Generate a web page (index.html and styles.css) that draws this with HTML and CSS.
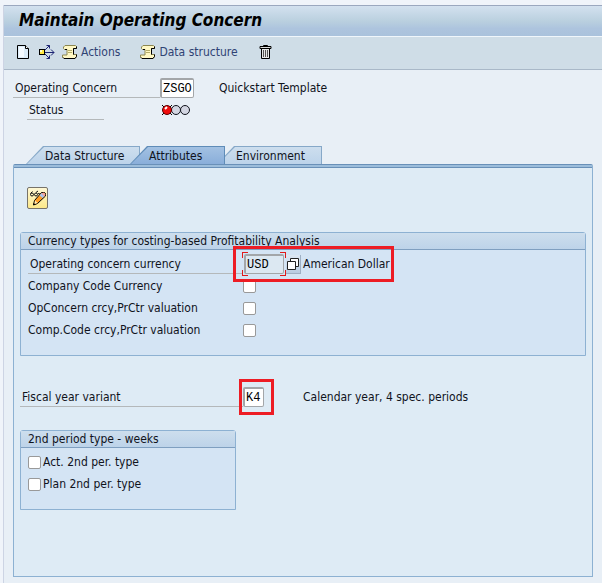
FILE: index.html
```html
<!DOCTYPE html>
<html lang="en">
<head>
    <meta charset="utf-8">
    <title>Maintain Operating Concern</title>
    <link rel="stylesheet" href="styles.css">
</head>
<body>
    <main class="window">
        <header class="title-bar">
            <h1>Maintain Operating Concern</h1>
        </header>

        <nav class="toolbar" aria-label="Application toolbar">
            <button type="button" class="tool" aria-label="Create">
                <svg width="16" height="16" viewBox="0 0 16 16">
                    <path d="M1.500 1.500h8l3 3v10h-11z" fill="#dcecf8" stroke="#000"/>
                    <path d="M3 3h5v10H3z" fill="#f4faff"/>
                    <path d="M9.500 1.500v3h3" fill="#fff" stroke="#000"/>
                </svg>
            </button>
            <button type="button" class="tool" aria-label="Other object">
                <svg width="16" height="16" viewBox="0 0 16 16">
                    <path d="M6 8.500h9M12 5.500l3 3-3 3M6 6l4.500-4.500M6 10l4.500 4.500M7.500 1.500h3v3M7.500 14.500h3v-3" fill="none" stroke="#1c2474"/>
                    <rect x=".5" y="5.500" width="5" height="5" fill="#ffe840" stroke="#000"/>
                    <path d="M1 6h2v2H1z" fill="#fffbc8"/>
                </svg>
            </button>
            <button type="button" class="tool">
                <svg width="16" height="16" viewBox="0 0 16 16">
                    <path d="M3 1.500h10.500l1 1v2h-3v6h3v2l-1.500 2H2l-1.500-1.500V11h4.500V5.500H2.500L1.500 4.500V3z" fill="#fff8c4" stroke="#8c8750"/>
                    <path d="M11.500 10.500V4.500h3v-2M1 13.500l1 1h11l1.500-2v-2M5 5.500H3" fill="none" stroke="#000"/>
                    <path d="M6 6.500h4M6 8.500h4" stroke="#b5ad6a"/>
                </svg>
                Actions
            </button>
            <button type="button" class="tool tool-structure">
                <svg width="16" height="16" viewBox="0 0 16 16">
                    <path d="M3 1.500h10.500l1 1v2h-3v6h3v2l-1.500 2H2l-1.500-1.500V11h4.500V5.500H2.500L1.500 4.500V3z" fill="#fff8c4" stroke="#8c8750"/>
                    <path d="M11.500 10.500V4.500h3v-2M1 13.500l1 1h11l1.500-2v-2M5 5.500H3" fill="none" stroke="#000"/>
                    <path d="M6 6.500h4M6 8.500h4" stroke="#b5ad6a"/>
                </svg>
                Data structure
            </button>
            <button type="button" class="tool tool-delete" aria-label="Delete">
                <svg width="14" height="16" viewBox="0 0 14 16">
                    <path d="M2.500 5v9.500h8V5" fill="#e8e8e8" stroke="#000"/>
                    <path d="M4.500 6v7M6.500 6v7M8.500 6v7" stroke="#555"/>
                    <path d="M1 2.500h11v2H1zM4.500 2.500v-1h4v1" fill="#ddd" stroke="#000"/>
                </svg>
            </button>
        </nav>

        <section class="concern">
            <div class="row">
                <label class="label concern-label" for="concern">Operating Concern</label>
                <input class="field concern-field" id="concern" type="text" value="ZSGO">
                <span class="concern-text">Quickstart Template</span>
            </div>
            <div class="row">
                <span class="label status-label">Status</span>
                <svg class="lights" width="30" height="14" viewBox="0 0 30 14" role="img" aria-label="Red">
                    <circle cx="24" cy="7" r="4.500" fill="#d3d6e2" stroke="#10131c"/>
                    <circle cx="15" cy="7" r="4.500" fill="#d3d6e2" stroke="#10131c"/>
                    <path d="M1 2l10 10M11 2L1 12" stroke="#000"/>
                    <circle cx="6" cy="7" r="4.500" fill="#f00c0c" stroke="#5c0000"/>
                    <path d="M4 6l2-2" stroke="#fff" stroke-width="2"/>
                </svg>
            </div>
        </section>

        <div class="tabs" role="tablist">
            <button type="button" role="tab" class="tab tab-structure" aria-selected="false">Data Structure</button>
            <button type="button" role="tab" class="tab tab-attributes" aria-selected="true">Attributes</button>
            <button type="button" role="tab" class="tab tab-environment" aria-selected="false">Environment</button>
        </div>

        <section class="panel" role="tabpanel">
            <button type="button" class="edit" aria-label="Display / Change">
                <svg width="18" height="18" viewBox="0 0 18 18">
                    <path d="M1.500 4.500l2-2M1.500 5.500a1.500 1.500 0 1 0 3 0a1.500 1.500 0 1 0-3 0M5.500 5.500a1.500 1.500 0 1 0 3 0a1.500 1.500 0 1 0-3 0M7 3.500l2-1.500M9 4.500l2 .5" fill="none" stroke="#111"/>
                    <path d="M4.500 16l1-4.500L12.500 3.500h3l1 1v2.500l-8 7.500z" fill="#ff9d24" stroke="#000"/>
                    <path d="M10.500 6.500l2-2.500 3 3-2 2z" fill="#a9c4ee"/>
                    <path d="M13.500 4l2.500 2.500" stroke="#f4a0a0" stroke-width="2"/>
                    <path d="M6 11.500l2.500 2.500-3 1z" fill="#fff3c0"/>
                    <path d="M4.500 14l2 1.500-2 .5z" fill="#000"/>
                </svg>
            </button>

            <fieldset class="group">
                <legend class="group-title">Currency types for costing-based Profitability Analysis</legend>
                <div class="row">
                    <label class="label currency-label" for="currency">Operating concern currency</label>
                    <div class="currency">
                        <span class="focus">
                            <input class="field currency-field" id="currency" type="text" value="USD">
                        </span>
                        <button type="button" class="help" aria-label="Possible entries">
                            <svg width="12" height="12" viewBox="0 0 12 12">
                                <path d="M3.500 3V.5h8v8H9" fill="#fff" stroke="#222"/>
                                <path d="M.5 3.500h8v8h-8z" fill="#fff" stroke="#222"/>
                            </svg>
                        </button>
                        American Dollar
                    </div>
                </div>
                <div class="row check-row">
                    <label class="check-label" for="company">Company Code Currency</label>
                    <input class="check" id="company" type="checkbox">
                </div>
                <div class="row check-row">
                    <label class="check-label" for="op-valuation">OpConcern crcy,PrCtr valuation</label>
                    <input class="check" id="op-valuation" type="checkbox">
                </div>
                <div class="row check-row">
                    <label class="check-label" for="comp-valuation">Comp.Code crcy,PrCtr valuation</label>
                    <input class="check" id="comp-valuation" type="checkbox">
                </div>
            </fieldset>

            <div class="row fiscal">
                <label class="label fiscal-label" for="fiscal">Fiscal year variant</label>
                <div class="fiscal-value">
                    <input class="field fiscal-field" id="fiscal" type="text" value="K4">
                </div>
                <span>Calendar year, 4 spec. periods</span>
            </div>

            <fieldset class="group group-period">
                <legend class="group-title">2nd period type - weeks</legend>
                <div class="row check-row">
                    <input class="check" id="act" type="checkbox">
                    <label for="act">Act. 2nd per. type</label>
                </div>
                <div class="row check-row">
                    <input class="check" id="plan" type="checkbox">
                    <label for="plan">Plan 2nd per. type</label>
                </div>
            </fieldset>
        </section>
    </main>
</body>
</html>
```
FILE: styles.css
```css
* {
    box-sizing: border-box;
}

body {
    margin: 0;
    padding: 5px 0 0 3px;
    min-height: 100vh;
    display: flex;

    font: 12px/16px "DejaVu Sans Condensed", "Noto Sans", sans-serif;
    color: #10131c;
    background-color: #f0f4fa;
}

button, input {
    margin: 0;
    padding: 0;

    font: inherit;
    color: inherit;
    border: 0;
    background: none;
}

.window {
    flex: 1;
    min-width: 0;
    display: flex;
    flex-direction: column;

    border-left: 1px solid #cdd4e4;
    background-color: #e8eff6;
}

.title-bar {
    height: 32px;
    padding-left: 15px;
    display: flex;
    align-items: center;

    border-top: 1px solid #9ba8bf;
    border-bottom: 1px solid #f0f6fb;
    background: linear-gradient(#d3e1ef, #bad0df 50%, #adc4de 75%, #aac2dc);
}

h1 {
    margin: 0 0 2px;

    font-size: 17px;
    line-height: 24px;
    font-style: italic;
    color: #000;
}

.toolbar {
    height: 33px;
    padding: 0 12px 3px;
    display: flex;
    align-items: center;
    gap: 7px;

    border-bottom: 1px solid #a9b8c8;
    background-color: #cfdde7;
}

.tool {
    display: flex;
    align-items: center;
    gap: 3px;

    color: #2f4374;
}

.tool-structure {
    margin-left: 13px;
}

.tool-delete {
    margin-left: 14px;
}

.row {
    height: 22px;
    display: flex;
    align-items: center;
}

.label {
    height: 20px;
    padding-left: 2px;
    line-height: 20px;

    border-bottom: 1px solid #b4b8ba;
}

.field {
    height: 20px;
    padding: 0 1px;

    font: 12px/16px "Liberation Mono", monospace;
    color: #000;
    border: 2px solid #a3a6a9;
    border-right-width: 1px;
    border-bottom-width: 1px;
    border-radius: 2px;
    background-color: #fff;
}

.concern {
    padding: 7px 9px 0;
}

.concern-label {
    width: 147px;
}

.concern-field {
    width: 34px;
}

.concern-text {
    margin-left: 25px;
}

.status-label {
    width: 77px;
    margin-left: 14px;
}

.lights {
    margin-left: 57px;
}

/* tabs */

.tabs {
    margin: 25px 9px 0 22px;
    display: flex;
}

.tab {
    position: relative;
    z-index: 0;
    height: 18px;
    padding: 3px 0 0 19px;

    line-height: 15px;
    text-align: left;
}

.tab::before, .tab::after {
    content: "";
    position: absolute;
    inset: 0;
    z-index: -2;

    background-color: #86a8c8;
    clip-path: polygon(0 100%, 17px 0, 100% 0, 100% 100%);
}

.tab::after {
    inset: 1px 1px 0 1px;
    z-index: -1;

    background: linear-gradient(#cddeee, #bcd3ea);
}

.tab-structure {
    width: 114px;
}

.tab-attributes {
    z-index: 1;
    width: 95px;
    margin-left: -10px;
}

.tab-attributes::before {
    background-color: #5f8cb8;
}

.tab-attributes::after {
    background: linear-gradient(#a3c1e2, #89aeda);
}

.tab-environment {
    width: 105px;
    margin-left: -8px;
}

.panel {
    flex: 1;
    margin: 0 9px 6px;
    padding: 22px 6px;

    border: 1px solid #8db1d2;
    border-top-color: #6990b8;
    border-radius: 2px 2px 0 0;
    background: linear-gradient(#9cbddb 2px, #6990b8 2px, #6990b8 3px, #deebf5 3px);
}

.edit {
    width: 21px;
    height: 22px;
    margin-left: 7px;
    display: flex;
    align-items: center;
    justify-content: center;

    border: 1px solid #77736a;
    border-radius: 2px;
    background: linear-gradient(#fff8d4, #fde98a);
}

/* groups */

.group {
    min-width: 0;
    margin: 23px 0 0;
    padding: 0 0 14px;

    border: 1px solid #8db1d2;
    border-radius: 3px 3px 0 0;
    background-color: #d4e4f4;
}

.group-title {
    float: left;
    width: 100%;
    height: 17px;
    margin-bottom: 3px;
    padding: 0 7px;

    border-bottom: 1px solid #7f9fc0;
    background: linear-gradient(#cddeed, #bdd3e9);
}

.group .row {
    clear: both;
}

.currency-label {
    width: 214px;
    margin-left: 7px;
}

.currency {
    position: relative;
    display: flex;
    align-items: center;
    gap: 2px;
}

/* red frames over the highlighted fields */

.currency::after, .fiscal-value::after {
    content: "";
    position: absolute;
    inset: -6px -4px -6px -9px;

    border: 3px solid #ed1c24;
    pointer-events: none;
}

.focus {
    --mark: #e01b1b;
    height: 24px;
    padding: 2px;

    background:
        linear-gradient(var(--mark), var(--mark)) 0 0 / 6px 1px,
        linear-gradient(var(--mark), var(--mark)) 0 0 / 1px 6px,
        linear-gradient(var(--mark), var(--mark)) 100% 0 / 6px 1px,
        linear-gradient(var(--mark), var(--mark)) 100% 0 / 1px 6px,
        linear-gradient(var(--mark), var(--mark)) 0 100% / 6px 1px,
        linear-gradient(var(--mark), var(--mark)) 0 100% / 1px 6px,
        linear-gradient(var(--mark), var(--mark)) 100% 100% / 6px 1px,
        linear-gradient(var(--mark), var(--mark)) 100% 100% / 1px 6px;
    background-repeat: no-repeat;
}

.currency-field {
    display: block;
    width: 40px;

    background-color: #dce8f2;
}

.help {
    width: 15px;
    height: 19px;
    margin-left: -2px;
    display: flex;
    align-items: center;
    justify-content: center;

    border-right: 1px solid #9fb0c4;
    border-bottom: 1px solid #9fb0c4;
    background: linear-gradient(#dde8f3, #b9cce2);
}

.check-row {
    padding-left: 7px;
}

.check-label {
    width: 215px;
}

.check {
    appearance: none;
    width: 13px;
    height: 13px;
    margin-right: 2px;

    border: 1px solid #999;
    border-radius: 2px;
    background-color: #fff;
}

.fiscal {
    margin-top: 30px;
}

.fiscal-label {
    width: 223px;
}

.fiscal-value {
    position: relative;
    margin-right: 39px;
}

.fiscal-field {
    display: block;
    width: 21px;
}

.fiscal-value::after {
    inset: -8px -10px -8px -4px;
}

.group-period {
    width: 216px;
    margin-top: 22px;
}
```
